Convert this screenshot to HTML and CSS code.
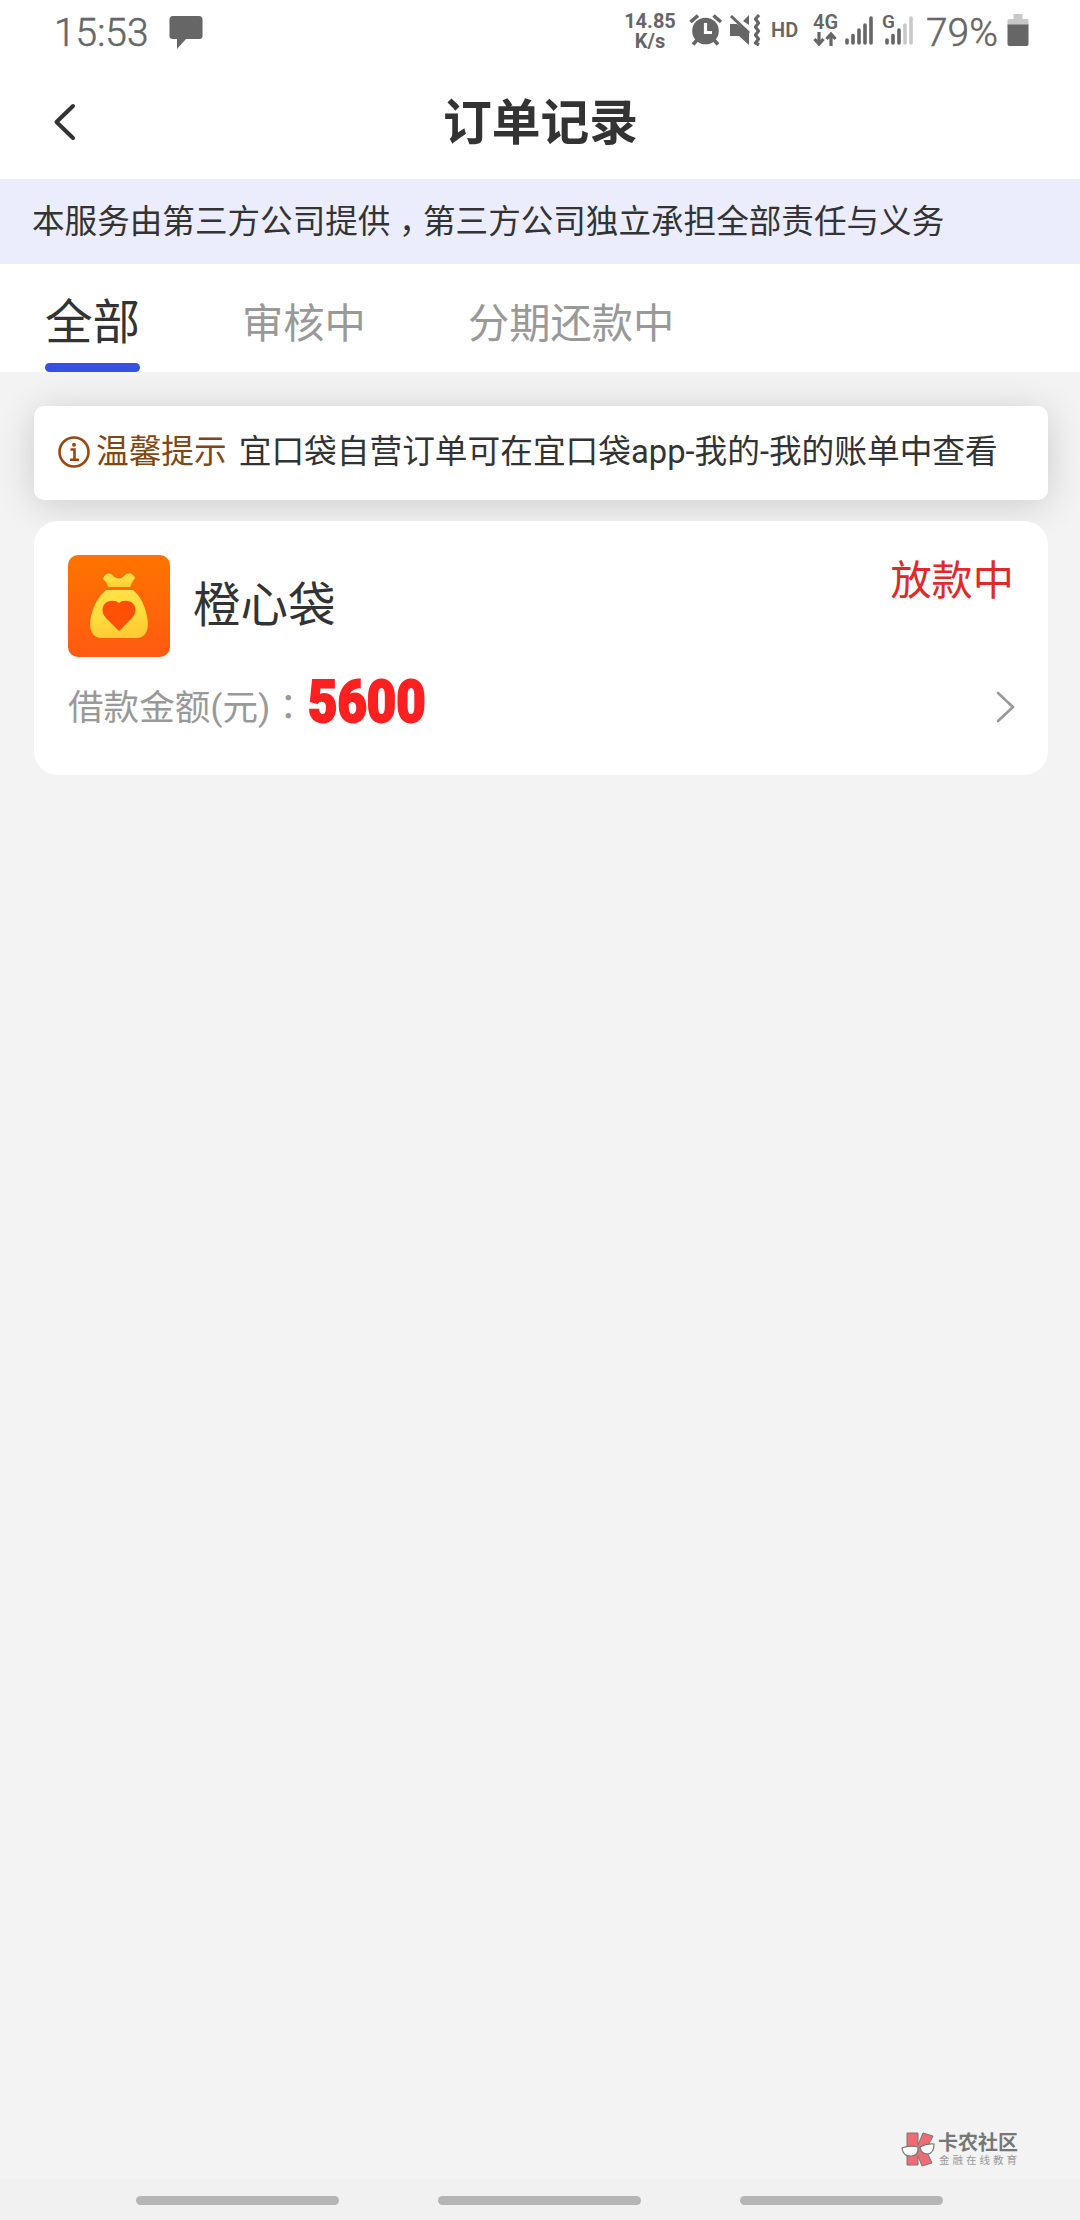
FILE: index.html
```html
<!DOCTYPE html>
<html lang="zh-CN">
<head>
<meta charset="utf-8">
<title>订单记录</title>
<link rel="stylesheet" href="styles.css">
</head>
<body>
<div class="screen">
  <div class="status">
    <span class="clock">15:53</span>
    <svg class="chat" width="34" height="34" viewBox="0 0 34 34"><path d="M4 0H30Q33.500 0 33.500 3.500V20Q33.500 23 30.500 23H17L8 33V23H4Q.5 23 .5 20V3.500Q.5 0 4 0Z"/></svg>
    <div class="speed"><span>14.85</span><span>K/s</span></div>
    <svg class="alarm" width="34" height="32" viewBox="0 0 34 32"><circle cx="16.500" cy="17" r="13.300"/><g fill="none" stroke="#666" stroke-width="3.600"><path d="M1.500 8 9 1.500M24.500 1.500 32 8M4 30.500 8 26M29 30.500 25 26"/></g><path d="M16.500 9V18.500H23" fill="none" stroke="#fff" stroke-width="3.200"/></svg>
    <svg class="mute" width="32" height="32" viewBox="0 0 32 32"><path d="M1 10H8L20 19V31L10 22H1ZM14 7 20 1V11Z"/><path d="M2 2 20 19" stroke="#666" stroke-width="3"/><path d="M30 1 26.500 5 29.500 9 26.500 13 29.500 17 26.500 21 29.500 25 26.500 29 30 31" fill="none" stroke="#666" stroke-width="3.200" stroke-linejoin="round"/></svg>
    <span class="hd">HD</span>
    <div class="net"><span>4G</span><svg width="24" height="14" viewBox="0 0 24 14"><path d="M6 0V12M1.500 7 6 12 10.500 7M18 14V2M13.500 7 18 2 22.500 7" fill="none" stroke="#666" stroke-width="3.200"/></svg></div>
    <svg class="bars" width="28" height="30" viewBox="0 0 28 30"><path d="M2 28V25M8 28V20.500M14 28V15M20 28V10M26 28V3" stroke="#666" stroke-width="3.600" stroke-linecap="round"/></svg>
    <div class="second"><span class="g">G</span><svg width="28" height="30" viewBox="0 0 28 30"><path d="M2 28V25M8 28V20.500M14 28V15" stroke="#666" stroke-width="3.600" stroke-linecap="round"/><path d="M20 28V10M26 28V3" stroke="#c8c8c8" stroke-width="3.600" stroke-linecap="round"/></svg></div>
    <span class="percent">79%</span>
    <svg class="battery" width="22" height="32" viewBox="0 0 22 32"><path d="M6.500 0H15.500V5H20Q21.500 5 21.500 6.500V12H.5V6.500Q.5 5 2 5H6.500Z" fill="#c8c8c8"/><path d="M.5 10.500H21.500V30Q21.500 32 19.500 32H2.500Q.5 32 .5 30Z"/></svg>
  </div>
  <header class="header">
    <svg class="back" width="24" height="38" viewBox="0 0 24 38"><path d="M20 3 3.500 19 20 35" fill="none" stroke="#333" stroke-width="4" stroke-linecap="round" stroke-linejoin="round"/></svg>
    <h1>订单记录</h1>
  </header>
  <div class="banner">本服务由第三方公司提供<span class="comma" lang="zh-Hant">，</span>第三方公司独立承担全部责任与义务</div>
  <nav class="tabs">
    <div class="tab active">全部</div>
    <div class="tab">审核中</div>
    <div class="tab">分期还款中</div>
  </nav>
  <main class="content">
    <div class="notice">
      <svg width="32" height="34" viewBox="0 0 32 34"><circle cx="16" cy="17" r="14.500" fill="none" stroke="#984812" stroke-width="2.600"/><circle cx="16" cy="9.800" r="2" fill="#984812"/><path d="M12.500 14.500H16.500V24.500M12 24.800H21" fill="none" stroke="#984812" stroke-width="2.600"/></svg>
      <span class="tip">温馨提示</span>
      <span class="message">宜口袋自营订单可在宜口袋app-我的-我的账单中查看</span>
    </div>
    <section class="order">
      <div class="top">
        <svg class="logo" width="102" height="102" viewBox="0 0 102 102">
          <defs>
            <linearGradient id="orange" x2="0" y2="1"><stop stop-color="#ff7400"/><stop offset="1" stop-color="#ff5a12"/></linearGradient>
            <linearGradient id="gold" x2=".2" y2="1"><stop stop-color="#ffe04a"/><stop offset=".5" stop-color="#ffdf3d"/><stop offset="1" stop-color="#ffcc35"/></linearGradient>
          </defs>
          <rect width="102" height="102" rx="10" fill="url(#orange)"/>
          <path d="M35 24C37 18 42 17 45 21Q51 26 56 21C60 16 66 19 67 23Q64 27 62 32H40Q39 27 35 24Z" fill="url(#gold)"/>
          <path d="M38 35H65Q75 43 79 61C82 76 77 83 68 83H34C25 83 20 76 23 61Q27 44 38 35Z" fill="url(#gold)"/>
          <path d="M51 76 38 63C32 57 34 47 42 46Q48 45 51 48Q54 45 60 46C68 47 70 57 64 63Z" fill="#ff5006"/>
        </svg>
        <h2>橙心袋</h2>
        <span class="state">放款中</span>
      </div>
      <div class="bottom">
        <span class="label">借款金额(元)<span class="colon" lang="zh-Hant">：</span></span>
        <span class="amount">5600</span>
        <svg class="arrow" width="20" height="32" viewBox="0 0 20 32"><path d="M2 2 17 16 2 30" fill="none" stroke="#999" stroke-width="2.600" stroke-linecap="round"/></svg>
      </div>
    </section>
  </main>
  <div class="watermark">
    <svg width="36" height="36" viewBox="0 0 36 36"><path d="M6 1H17V13L22 1 32 4 25 18 31 31 21 34 17 24V33H6Z" fill="#f06c74" stroke="#777" stroke-width="1"/><path d="M1 16Q8 13 17 15Q18 23 11 24Q2 25 1 16ZM19 15Q26 11 33 12Q33 21 27 22Q20 22 19 15Z" fill="#fff" stroke="#777" stroke-width="1.200"/></svg>
    <div><strong>卡农社区</strong><small>金融在线教育</small></div>
  </div>
  <footer class="system"><i></i><i></i><i></i></footer>
</div>
</body>
</html>
```
FILE: styles.css
```css
* { box-sizing: border-box; }
body { margin: 0; background: #f3f3f3; font-family: Roboto, "Noto Sans CJK SC", sans-serif; color: #333; }
svg { display: block; flex: none; }
h1, h2 { margin: 0; }
.screen { width: 1080px; height: 2220px; display: flex; flex-direction: column; white-space: nowrap; overflow: hidden; }

.status { height: 64px; flex: none; background: #fff; display: flex; align-items: flex-start; padding-left: 54px; color: #666; fill: #666; }
.clock, .percent { font-size: 38.900px; line-height: 66px; font-weight: 300; -webkit-text-stroke: .5px #666; }
.clock { width: 115px; }
.chat { margin-top: 16px; }
.speed { width: 58px; margin: 12px 0 0 418px; display: flex; flex-direction: column; align-items: center; font-size: 20px; line-height: 19.500px; font-weight: 700; }
.alarm { margin: 14px 0 0 10px; }
.mute { margin: 14px 0 0 6px; }
.hd { margin-left: 10px; width: 42px; font-size: 20px; line-height: 60px; font-weight: 600; }
.net { width: 26px; font-size: 20px; font-weight: 600; line-height: 20px; margin-top: 12px; }
.bars { margin: 15px 0 0 6px; }
.second { display: flex; margin-left: 9px; font-size: 19px; line-height: 19px; font-weight: 600; }
.second .g { width: 14px; margin: 12px -11px 0 0; }
.second svg { margin-top: 15px; }
.percent { margin-left: 13px; }
.battery { margin: 14px 0 0 9px; }

.header { height: 115px; flex: none; background: #fff; display: grid; grid-template-columns: 52px 1fr 52px; align-items: center; }
.back { justify-self: end; margin: 1px -25px 0 0; }
.header h1 { text-align: center; font-size: 48.800px; line-height: 80px; font-weight: 700; padding: 5px 0 0 1px; }

.banner { height: 85px; flex: none; background: #ebedfd; padding-left: 32px; font-size: 32.600px; line-height: 86px; }
.comma { display: inline-block; line-height: 1; vertical-align: -10px; font-family: "Noto Sans CJK TC", sans-serif; }

.tabs { height: 108px; flex: none; background: #fff; display: flex; padding-left: 45px; }
.tab { font-size: 41.300px; line-height: 121px; color: #999; margin-right: 102px; }
.tab.active { width: 95px; font-size: 47.500px; line-height: 118px; color: #333; display: flex; flex-direction: column; }
.tab.active::after { content: ""; height: 9px; margin-top: -19px; border-radius: 5px; background: #3252e0; }

.content { flex: 1; padding: 34px 32px 0 34px; }
.notice { height: 94px; background: #fff; border-radius: 10px; box-shadow: 0 5px 38px rgba(0,0,0,.16); display: flex; align-items: center; padding: 0 0 3px 24px; font-size: 32.700px; line-height: 48px; }
.tip { color: #804812; margin-left: 6px; }
.message { margin-left: 12px; }
.order { margin-top: 21px; height: 254px; background: #fff; border-radius: 24px; padding: 34px 32px 0 34px; }
.top { display: flex; align-items: flex-start; height: 102px; }
.top h2 { font-size: 47.500px; line-height: 103px; font-weight: 400; margin-left: 23px; }
.state { margin-left: auto; margin-right: 2px; color: #df2a2a; font-size: 41.200px; line-height: 53px; }
.bottom { display: flex; align-items: center; height: 100px; }
.label { width: 240px; color: #999; font-size: 35.600px; margin-top: -5px; }
.colon { font-family: "Noto Sans CJK TC", sans-serif; line-height: 1; }
.amount { color: #fc2020; font-size: 59px; line-height: 60px; font-weight: 900; -webkit-text-stroke: 2px #fc2020; transform: scaleX(.86); transform-origin: left; margin-top: -11px; }
.arrow { margin-left: auto; }

.watermark { height: 69px; flex: none; display: flex; padding: 22px 0 0 901px; }
.watermark div { display: flex; flex-direction: column; padding-left: 1px; color: #777; }
.watermark strong { font-size: 20px; line-height: 22px; font-weight: 700; }
.watermark small { font-size: 10.500px; line-height: 13px; letter-spacing: 3px; color: #999; margin-left: 1px; }
.system { height: 41px; flex: none; background: #f1f1f1; display: flex; gap: 99px; padding: 17px 0 0 136px; }
.system i { width: 203px; height: 9px; border-radius: 5px; background: #b5b5b5; }
```
